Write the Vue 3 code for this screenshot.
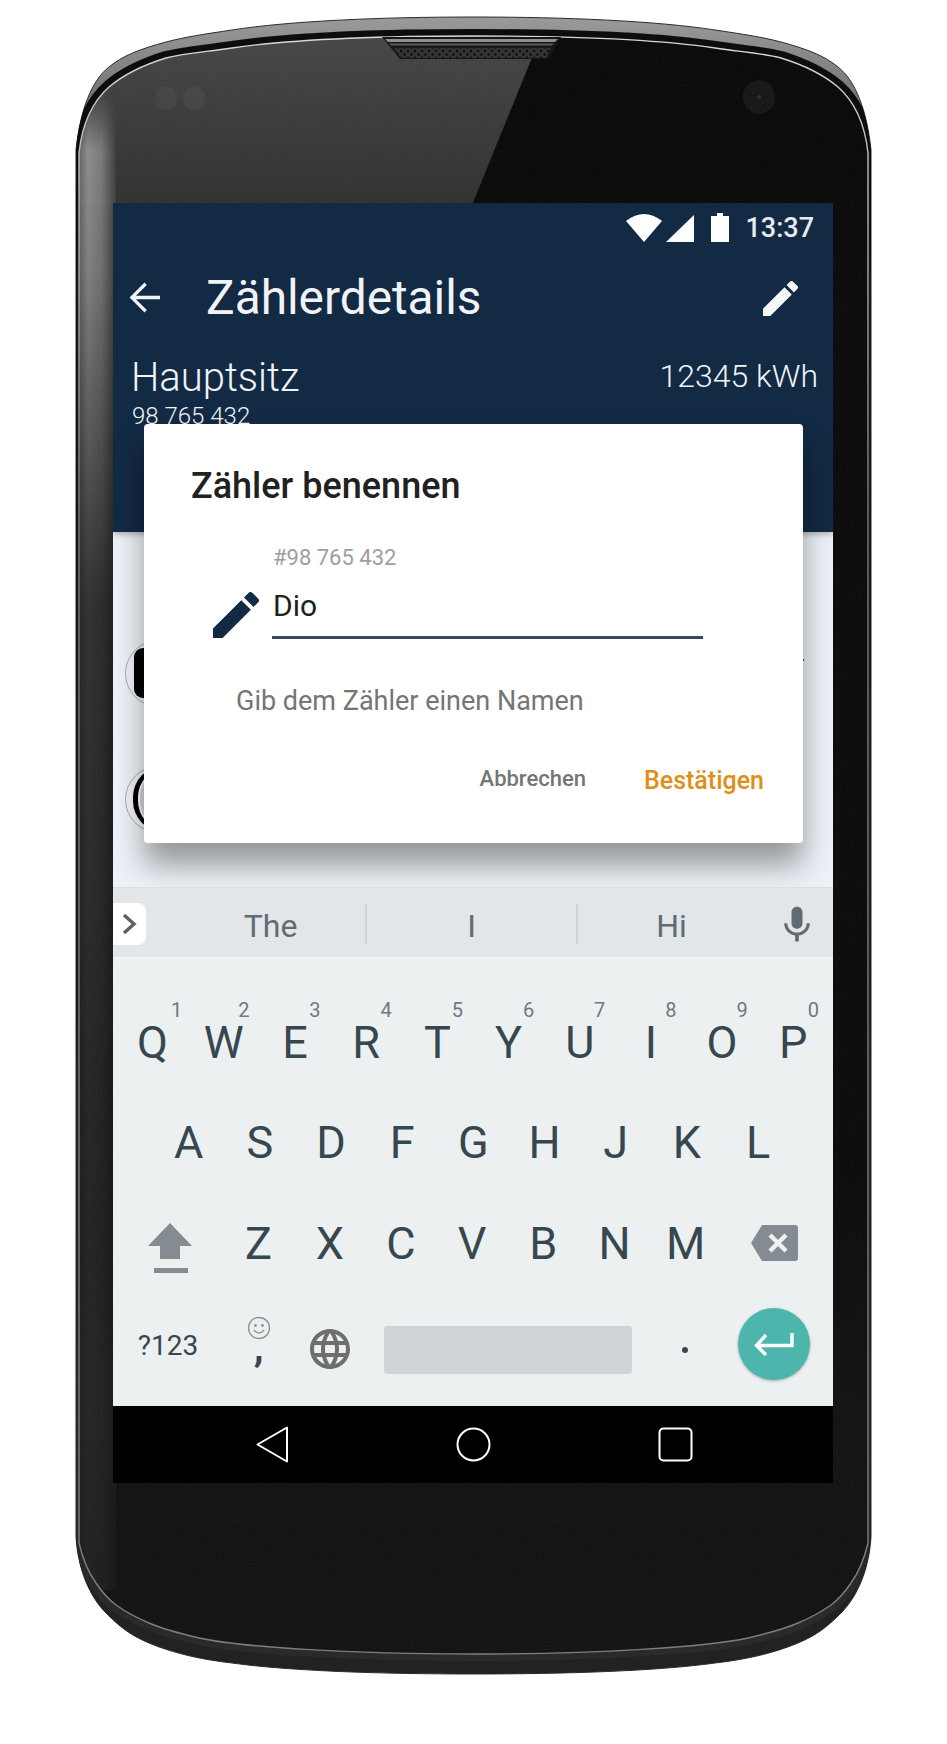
<template>
  <div class="page">
    <svg class="shell" width="947" height="1744" viewBox="0 0 947 1744">
      <defs>
        <path id="outer" d="M473.5 17 C380 17 290 21 232 30 C205 34 185 37 166 42 C140 49 122 56 109 67 C92 80 80 110 76 150 V1537 C78 1570 90 1597 106 1613 C120 1627 130 1635 149 1643 C175 1654 205 1660 232 1663 C290 1671 380 1674 473.5 1674 C567 1674 657 1671 715 1663 C742 1660 772 1654 798 1643 C817 1635 827 1627 841 1613 C857 1597 869 1570 871 1537 V150 C867 110 855 80 838 67 C825 56 807 49 781 42 C762 37 742 34 715 30 C657 21 567 17 473.5 17 Z" />
        <path id="glass" d="M473.5 36 C400 36 300 38 232 48 C205 52 185 53 166 58 C140 66 122 76 109 87 C92 102 82 125 79 153 V1543 C83 1560 88 1572 96 1583 C102 1592 108 1599 116 1605 C126 1612 137 1618 149 1623 C165 1630 182 1634 199 1638 C240 1647 350 1654 473.5 1654 C597 1654 707 1647 748 1638 C765 1634 782 1630 798 1623 C810 1618 821 1612 831 1605 C839 1599 845 1592 851 1583 C859 1572 864 1560 868 1543 V153 C865 125 855 102 838 87 C825 76 807 66 781 58 C762 53 742 52 715 48 C647 38 547 36 473.5 36 Z" />
        <clipPath id="outerClip"><use href="#outer" /></clipPath>
        <clipPath id="glassClip"><use href="#glass" /></clipPath>
        <linearGradient id="shellFill" x1="0" y1="0" x2="0" y2="1">
          <stop offset="0" stop-color="#9a9a9a" />
          <stop offset="0.07" stop-color="#666" />
          <stop offset="0.3" stop-color="#333" />
          <stop offset="1" stop-color="#222" />
        </linearGradient>
        <linearGradient id="bandFill" x1="0" y1="0" x2="0" y2="1">
          <stop offset="0" stop-color="#0c0c0c" />
          <stop offset="0.2" stop-color="#141414" />
          <stop offset="1" stop-color="#2a2a2a" />
        </linearGradient>
        <linearGradient id="lineFill" x1="0" y1="0" x2="0" y2="1">
          <stop offset="0" stop-color="#d8d8d8" />
          <stop offset="0.3" stop-color="#777" />
          <stop offset="1" stop-color="#7e7e7e" />
        </linearGradient>
        <linearGradient id="glassFill" x1="0" y1="0" x2="0" y2="1">
          <stop offset="0" stop-color="#090909" />
          <stop offset="0.7" stop-color="#0a0a0a" />
          <stop offset="0.85" stop-color="#111" />
          <stop offset="1" stop-color="#121212" />
        </linearGradient>
        <linearGradient id="reflect" x1="0" y1="0" x2="0" y2="1">
          <stop offset="0" stop-color="#464646" />
          <stop offset="1" stop-color="#303030" />
        </linearGradient>
        <linearGradient id="edge" x1="0" y1="0" x2="1" y2="0">
          <stop offset="0" stop-color="#555" />
          <stop offset="0.3" stop-color="#8c8c8c" />
          <stop offset="0.65" stop-color="#777" />
          <stop offset="1" stop-color="#3c3c3c" />
        </linearGradient>
        <linearGradient id="edgeFade" x1="0" y1="0" x2="0" y2="1">
          <stop offset="0" stop-color="#fff" stop-opacity="0" />
          <stop offset="0.04" stop-color="#fff" />
          <stop offset="0.12" stop-color="#fff" stop-opacity="0.9" />
          <stop offset="0.34" stop-color="#fff" stop-opacity="0.3" />
          <stop offset="1" stop-color="#fff" stop-opacity="0.12" />
        </linearGradient>
        <mask id="edgeMask"><rect x="76" y="90" width="40" height="1500" fill="url(#edgeFade)" /></mask>
        <pattern id="dots" width="7" height="7" patternUnits="userSpaceOnUse">
          <circle cx="2" cy="2" r="1.2" fill="#0b0b0b" />
          <circle cx="5.5" cy="5.5" r="1.2" fill="#0b0b0b" />
        </pattern>
        <filter id="soft"><feGaussianBlur stdDeviation="0.7" /></filter>
        <filter id="noise">
          <feTurbulence type="fractalNoise" baseFrequency="0.8" numOctaves="2" />
          <feColorMatrix values="0 0 0 0 1  0 0 0 0 1  0 0 0 0 1  0.35 0 0 0 -0.08" />
        </filter>
      </defs>
      <use href="#outer" fill="url(#shellFill)" stroke="#2c2c2c" stroke-width="1" filter="url(#soft)" />
      <g clip-path="url(#outerClip)">
        <use href="#glass" fill="none" stroke="url(#bandFill)" stroke-width="14" filter="url(#soft)" />
      </g>
      <use href="#glass" fill="url(#glassFill)" />
      <g clip-path="url(#glassClip)">
        <path d="M70 30 H561 C548 42 538 50 531 60 L472 205 H70 Z" fill="url(#reflect)" />
        <rect x="76" y="90" width="40" height="1500" fill="url(#edge)" mask="url(#edgeMask)" />
        <ellipse cx="166" cy="98" rx="11" ry="12" fill="#525252" opacity="0.3" />
        <ellipse cx="194" cy="98" rx="11" ry="12" fill="#565656" opacity="0.3" />
        <ellipse cx="759" cy="97" rx="16" ry="17" fill="#161616" />
        <circle cx="759" cy="97" r="2" fill="#2a2a2a" />
        <rect x="76" y="30" width="800" height="1630" filter="url(#noise)" opacity="0.2" />
      </g>
      <use href="#glass" fill="none" stroke="url(#lineFill)" stroke-width="1.4" />
      <path d="M382 37 H561 L549 59 H400 Z" fill="#161616" />
      <path d="M385 39 H558 L555 42 H388 Z" fill="#8f8f8f" />
      <path d="M389 43.500 H554 L552 45.500 H391 Z" fill="#5c5c5c" />
      <path d="M394 48 H551 L546 58 H401 Z" fill="#343434" />
      <path d="M394 48 H551 L546 58 H401 Z" fill="url(#dots)" />
    </svg>

    <div class="screen">
      <header class="head">
        <div class="status">
          <svg width="36" height="28" viewBox="0 0 36 28"><path d="M0 7 Q18 -7 36 7 L18 28 Z" fill="#fff" /></svg>
          <svg class="signal" width="28" height="28" viewBox="0 0 28 28"><path d="M28 1 V28 H0 Z" fill="#fff" /></svg>
          <svg class="battery" width="18" height="29" viewBox="0 0 18 29"><path d="M6 0 H12 V3 H18 V29 H0 V3 H6 Z" fill="#fff" /></svg>
          <span class="time">13:37</span>
        </div>
        <div class="toolbar">
          <svg class="back" width="31" height="31" viewBox="4 4 16 16"><path d="M20 11.100H7.600l5.600-5.600L12 4.300 4.300 12l7.700 7.700 1.200-1.200-5.600-5.600H20z" fill="#f1f3f7" /></svg>
          <h1 class="title">Zählerdetails</h1>
          <svg class="edit" width="35" height="35" viewBox="3 3 18 18"><path :d="pencil" fill="#f6f7f9" /></svg>
        </div>
        <div class="meter">
          <div class="meter-name">Hauptsitz</div>
          <div class="meter-value">12345 kWh</div>
        </div>
        <div class="meter-no">98 765 432</div>
      </header>

      <main class="list">
        <div class="row">
          <div class="avatar"><div class="tank tank-full"></div></div>
        </div>
        <div class="row">
          <div class="avatar"><div class="tank tank-ring"></div></div>
        </div>
        <div class="row row-last">
          <div class="avatar"></div>
        </div>
        <span class="mark"></span>
      </main>

      <section class="dialog">
        <h2 class="dialog-title">Zähler benennen</h2>
        <div class="field">
          <svg class="field-icon" width="46" height="46" viewBox="3 3 18 18"><path :d="pencil" fill="#122a43" /></svg>
          <div class="field-body">
            <div class="field-label">#98 765 432</div>
            <div class="field-input">Dio</div>
          </div>
        </div>
        <p class="hint">Gib dem Zähler einen Namen</p>
        <div class="actions">
          <span class="btn btn-cancel">Abbrechen</span>
          <span class="btn btn-ok">Bestätigen</span>
        </div>
      </section>

      <section class="keyboard">
        <div class="strip">
          <div class="tab">
            <svg width="15" height="22" viewBox="0 0 15 22"><path d="M2 2 L12 11 L2 20" fill="none" stroke="#616161" stroke-width="3.400" /></svg>
          </div>
          <div class="sugg sugg-first">The</div>
          <div class="sugg sugg-mid">I</div>
          <div class="sugg sugg-last">Hi</div>
          <svg class="mic" width="44" height="44" viewBox="0 0 24 24"><path d="M12 14c1.660 0 2.990-1.340 2.990-3L15 5c0-1.660-1.340-3-3-3S9 3.340 9 5v6c0 1.660 1.340 3 3 3zm5.300-3c0 3-2.540 5.100-5.300 5.100S6.700 14 6.700 11H5c0 3.410 2.720 6.230 6 6.720V21h2v-3.280c3.280-.48 6-3.300 6-6.720h-1.700z" fill="#5f6b73" /></svg>
        </div>

        <div class="keys">
          <div class="key-row row-top">
            <div v-for="(k, i) in topRow" :key="k" class="key">
              {{ k }}<span class="digit">{{ (i + 1) % 10 }}</span>
            </div>
          </div>
          <div class="key-row row-home">
            <div v-for="k in homeRow" :key="k" class="key">{{ k }}</div>
          </div>
          <div class="key-row">
            <div class="shift">
              <svg width="44" height="51" viewBox="0 0 44 51">
                <path d="M22 0 L44 23 H32 V36 H12 V23 H0 Z" fill="#848b91" />
                <rect x="6" y="45" width="34" height="5" fill="#848b91" />
              </svg>
            </div>
            <div v-for="k in bottomRow" :key="k" class="key">{{ k }}</div>
            <div class="backspace">
              <svg width="47" height="36" viewBox="0 0 47 36">
                <path d="M11 0 H44 Q47 0 47 3 V33 Q47 36 44 36 H11 L0 18 Z" fill="#848b92" />
                <path d="M19 10 L35 26 M35 10 L19 26" stroke="#eef1f2" stroke-width="4.500" />
              </svg>
            </div>
          </div>
          <div class="key-row row-fn">
            <div class="fn-sym">?123</div>
            <div class="fn-comma">
              <svg width="24" height="24" viewBox="0 0 24 24">
                <circle cx="12" cy="12" r="10.500" fill="none" stroke="#8d9498" stroke-width="1.300" />
                <circle cx="8.500" cy="9.500" r="1.400" fill="#8d9498" />
                <circle cx="15.500" cy="9.500" r="1.400" fill="#8d9498" />
                <path d="M6.800 14 Q12 20 17.200 14" fill="none" stroke="#8d9498" stroke-width="1.300" />
              </svg>
              <span class="comma">,</span>
            </div>
            <div class="fn-globe">
              <svg width="48" height="48" viewBox="0 0 24 24"><path d="M11.990 2C6.470 2 2 6.480 2 12s4.470 10 9.990 10C17.520 22 22 17.520 22 12S17.520 2 11.990 2zm6.930 6h-2.950c-.32-1.250-.78-2.450-1.380-3.560 1.840.63 3.370 1.910 4.330 3.560zM12 4.040c.83 1.200 1.480 2.530 1.910 3.960h-3.820c.43-1.430 1.080-2.760 1.910-3.960zM4.260 14C4.100 13.360 4 12.690 4 12s.1-1.360.26-2h3.380c-.08.66-.14 1.320-.14 2 0 .68.06 1.340.14 2H4.260zm.82 2h2.950c.32 1.250.78 2.450 1.380 3.560-1.840-.63-3.370-1.900-4.330-3.560zm2.950-8H5.080c.96-1.660 2.490-2.930 4.330-3.560C8.810 5.550 8.350 6.750 8.030 8zM12 19.960c-.83-1.200-1.480-2.530-1.910-3.960h3.820c-.43 1.430-1.080 2.760-1.910 3.960zM14.340 14H9.660c-.09-.66-.16-1.320-.16-2 0-.68.07-1.350.16-2h4.680c.09.65.16 1.320.16 2 0 .68-.07 1.340-.16 2zm.25 5.560c.6-1.110 1.060-2.310 1.380-3.560h2.950c-.96 1.650-2.490 2.930-4.330 3.560zM16.360 14c.08-.66.14-1.320.14-2 0-.68-.06-1.340-.14-2h3.380c.16.64.26 1.310.26 2s-.1 1.360-.26 2h-3.380z" fill="#6e6e6e" /></svg>
            </div>
            <div class="space"></div>
            <div class="period"></div>
            <div class="enter">
              <svg width="40" height="24" viewBox="0 0 40 24"><path d="M38 1 V13.500 H3 M12 3 L2.500 13.500 L12 23" fill="none" stroke="#fff" stroke-width="3.400" /></svg>
            </div>
          </div>
        </div>
      </section>

      <nav class="nav">
        <svg width="33" height="37" viewBox="0 0 33 37"><path d="M31 1.500 V35.500 L1.500 18.500 Z" fill="none" stroke="#fff" stroke-width="2" stroke-linejoin="round" /></svg>
        <svg width="35" height="35" viewBox="0 0 35 35"><circle cx="17.500" cy="17.500" r="16" fill="none" stroke="#fff" stroke-width="2" /></svg>
        <svg width="35" height="35" viewBox="0 0 35 35"><rect x="1.500" y="1.500" width="32" height="32" rx="4" fill="none" stroke="#fff" stroke-width="2" /></svg>
      </nav>
    </div>
  </div>
</template>

<script setup>
const pencil = 'M3 17.25V21h3.75L17.81 9.94l-3.75-3.75L3 17.25zM20.71 7.04c.39-.39.39-1.02 0-1.41l-2.34-2.34c-.39-.39-1.02-.39-1.41 0l-1.83 1.83 3.75 3.75 1.83-1.83z'

const topRow = ['Q', 'W', 'E', 'R', 'T', 'Y', 'U', 'I', 'O', 'P']
const homeRow = ['A', 'S', 'D', 'F', 'G', 'H', 'J', 'K', 'L']
const bottomRow = ['Z', 'X', 'C', 'V', 'B', 'N', 'M']
</script>

<style>
html, body {
  background: #fff;
}
</style>

<style scoped>
.page {
  position: relative;
  width: 947px;
  height: 1744px;
  padding: 203px 0 0 113px;
  box-sizing: border-box;
  background: #fff;
  overflow: hidden;
  font-family: Roboto, "Liberation Sans", sans-serif;
}
.shell {
  position: absolute;
  left: 0;
  top: 0;
}

.screen {
  position: relative;
  width: 720px;
  height: 1280px;
  display: flex;
  flex-direction: column;
  overflow: hidden;
}

/* header */
.head {
  height: 329px;
  flex: none;
  background: #122a43;
  color: #f1f3f7;
  box-shadow: 0 2px 6px rgba(0, 0, 0, 0.3);
  position: relative;
  z-index: 1;
}
.status {
  height: 49px;
  display: flex;
  align-items: center;
  justify-content: flex-end;
  padding-right: 19px;
  box-sizing: border-box;
}
.signal {
  margin-left: 4px;
}
.battery {
  margin-left: 17px;
}
.time {
  margin-left: 16px;
  font-size: 27px;
  font-weight: 500;
  color: #e8ecf0;
}
.toolbar {
  height: 92px;
  display: flex;
  align-items: center;
  padding: 0 35px 0 16px;
}
.back {
  margin-bottom: 2px;
}
.title {
  flex: 1;
  margin: 0 0 0 46px;
  font-size: 47.8px;
  font-weight: 400;
  line-height: 56px;
}
.meter {
  display: flex;
  justify-content: space-between;
  align-items: center;
  padding: 11px 15px 0 18px;
}
.meter-name {
  font-size: 40px;
  font-weight: 300;
  line-height: 46px;
}
.meter-value {
  margin-bottom: 4px;
  font-size: 32px;
  font-weight: 300;
}
.meter-no {
  padding: 1px 0 0 19px;
  font-size: 24px;
  font-weight: 300;
  line-height: 28px;
}

/* list behind the dialog */
.list {
  position: relative;
  height: 355px;
  flex: none;
  padding-top: 78px;
  box-sizing: border-box;
  background: #eef2f8;
}
.row {
  height: 126px;
  display: flex;
  align-items: center;
  padding-left: 12px;
}
.row-last {
  padding-left: 18px;
}
.avatar {
  width: 67px;
  height: 67px;
  box-sizing: border-box;
  border: 1px solid #a8acb0;
  border-radius: 50%;
  display: flex;
  align-items: center;
  padding-left: 8px;
}
.tank {
  flex: none;
  box-sizing: border-box;
}
.tank-full {
  width: 50px;
  height: 50px;
  border-radius: 9px;
  background: #000;
}
.tank-ring {
  width: 62px;
  height: 66px;
  margin-left: -1px;
  border-radius: 33px;
  border-left: 5px solid #000;
  border-top: 3px solid #000;
  border-bottom: 3px solid #000;
  background: #d4d7dc;
  box-shadow: inset 2px 0 0 #fff;
}
.mark {
  position: absolute;
  left: 689px;
  top: 127px;
  width: 2px;
  height: 2px;
  background: #444;
}

/* dialog */
.dialog {
  position: absolute;
  left: 31px;
  top: 221px;
  width: 659px;
  height: 419px;
  z-index: 2;
  box-sizing: border-box;
  padding-top: 42px;
  background: #fff;
  border-radius: 4px;
  box-shadow: 0 22px 30px rgba(0, 0, 0, 0.38);
}
.dialog-title {
  margin: 0 0 0 47px;
  font-size: 36px;
  font-weight: 500;
  line-height: 40px;
  color: #212121;
}
.field {
  display: flex;
  align-items: flex-end;
  margin: 39px 0 0 69px;
}
.field-icon {
  margin-bottom: 2px;
}
.field-body {
  margin-left: 13px;
  width: 431px;
  padding-bottom: 1px;
}
.field-label {
  padding-left: 1px;
  font-size: 22px;
  line-height: 26px;
  color: #9e9e9e;
}
.field-input {
  margin-top: 15px;
  padding: 0 0 10px 1px;
  font-size: 30px;
  line-height: 40px;
  color: #212121;
  border-bottom: 3px solid #34495e;
}
.hint {
  margin: 45px 0 0 92px;
  font-size: 27px;
  line-height: 32px;
  color: #757575;
}
.actions {
  display: flex;
  justify-content: flex-end;
  align-items: center;
  gap: 58px;
  margin-top: 47px;
  padding-right: 39px;
}
.btn {
  font-size: 22px;
  font-weight: 500;
  line-height: 30px;
  color: #757575;
}
.btn-cancel {
  padding-bottom: 4px;
}
.btn-ok {
  font-size: 25px;
  color: #e08e1a;
}

/* keyboard */
.keyboard {
  position: relative;
  z-index: 3;
  height: 519px;
  flex: none;
  background: #ecf0f1;
}
.strip {
  height: 70px;
  display: flex;
  align-items: center;
  background: #e2e6e9;
  border-bottom: 2px solid #f3f5f6;
  box-shadow: inset 0 1px 0 #dcdfe2;
}
.tab {
  width: 33px;
  height: 42px;
  display: flex;
  align-items: center;
  justify-content: center;
  margin-top: 4px;
  box-sizing: border-box;
  background: #fff;
  border-radius: 0 8px 8px 0;
}
.sugg {
  height: 40px;
  margin-top: 4px;
  display: flex;
  align-items: center;
  justify-content: center;
  padding-top: 4px;
  box-sizing: border-box;
  font-size: 32px;
  color: #5f6c75;
}
.sugg-first {
  width: 189px;
  margin-left: 30px;
}
.sugg-mid {
  width: 213px;
  border-left: 2px solid #cfd4d7;
  border-right: 2px solid #cfd4d7;
}
.sugg-last {
  width: 187px;
}
.mic {
  margin-left: 10px;
  margin-top: 6px;
}
.keys {
  padding-top: 31px;
}
.key-row {
  height: 101px;
  display: flex;
  align-items: center;
}
.row-top {
  padding-left: 4px;
}
.row-home {
  padding-left: 40px;
}
.key {
  position: relative;
  width: 71.2px;
  flex: none;
  padding-top: 2px;
  text-align: center;
  font-size: 45px;
  font-weight: 380;
  line-height: 101px;
  color: #37474f;
}
.row-top .key {
  padding-top: 4px;
}
.digit {
  position: absolute;
  left: 0;
  width: 100%;
  top: 10px;
  padding-left: 40px;
  box-sizing: border-box;
  font-size: 20px;
  font-weight: 400;
  line-height: 24px;
  color: #6b7a83;
}
.key:first-child .digit {
  padding-left: 48px;
}
.shift {
  width: 110px;
  flex: none;
  padding: 12px 0 0 35px;
  box-sizing: border-box;
  line-height: 0;
}
.backspace {
  padding: 0 0 0 30px;
  line-height: 0;
}
.fn-sym {
  width: 110px;
  flex: none;
  padding-top: 4px;
  text-align: center;
  font-size: 28px;
  color: #37474f;
}
.fn-comma {
  width: 71.2px;
  flex: none;
  display: flex;
  flex-direction: column;
  align-items: center;
  margin-top: -16px;
}
.comma {
  font-size: 40px;
  font-weight: 700;
  line-height: 16px;
  color: #37474f;
}
.fn-globe {
  width: 71.3px;
  flex: none;
  display: flex;
  justify-content: center;
  margin-top: 10px;
}
.space {
  width: 248px;
  height: 48px;
  margin: 12px 0 0 19px;
  background: #cfd4d7;
  border-radius: 3px;
}
.period {
  width: 6px;
  height: 6px;
  margin: 12px 0 0 50px;
  background: #37474f;
  border-radius: 50%;
}
.enter {
  width: 72px;
  height: 72px;
  margin-left: 50px;
  display: flex;
  align-items: center;
  justify-content: center;
  background: #4db6ac;
  border-radius: 50%;
  box-shadow: 0 1px 3px rgba(0, 0, 0, 0.3);
}

/* nav bar */
.nav {
  height: 77px;
  flex: none;
  display: flex;
  align-items: center;
  background: #000;
  padding-left: 143px;
  gap: 167px;
}
</style>
